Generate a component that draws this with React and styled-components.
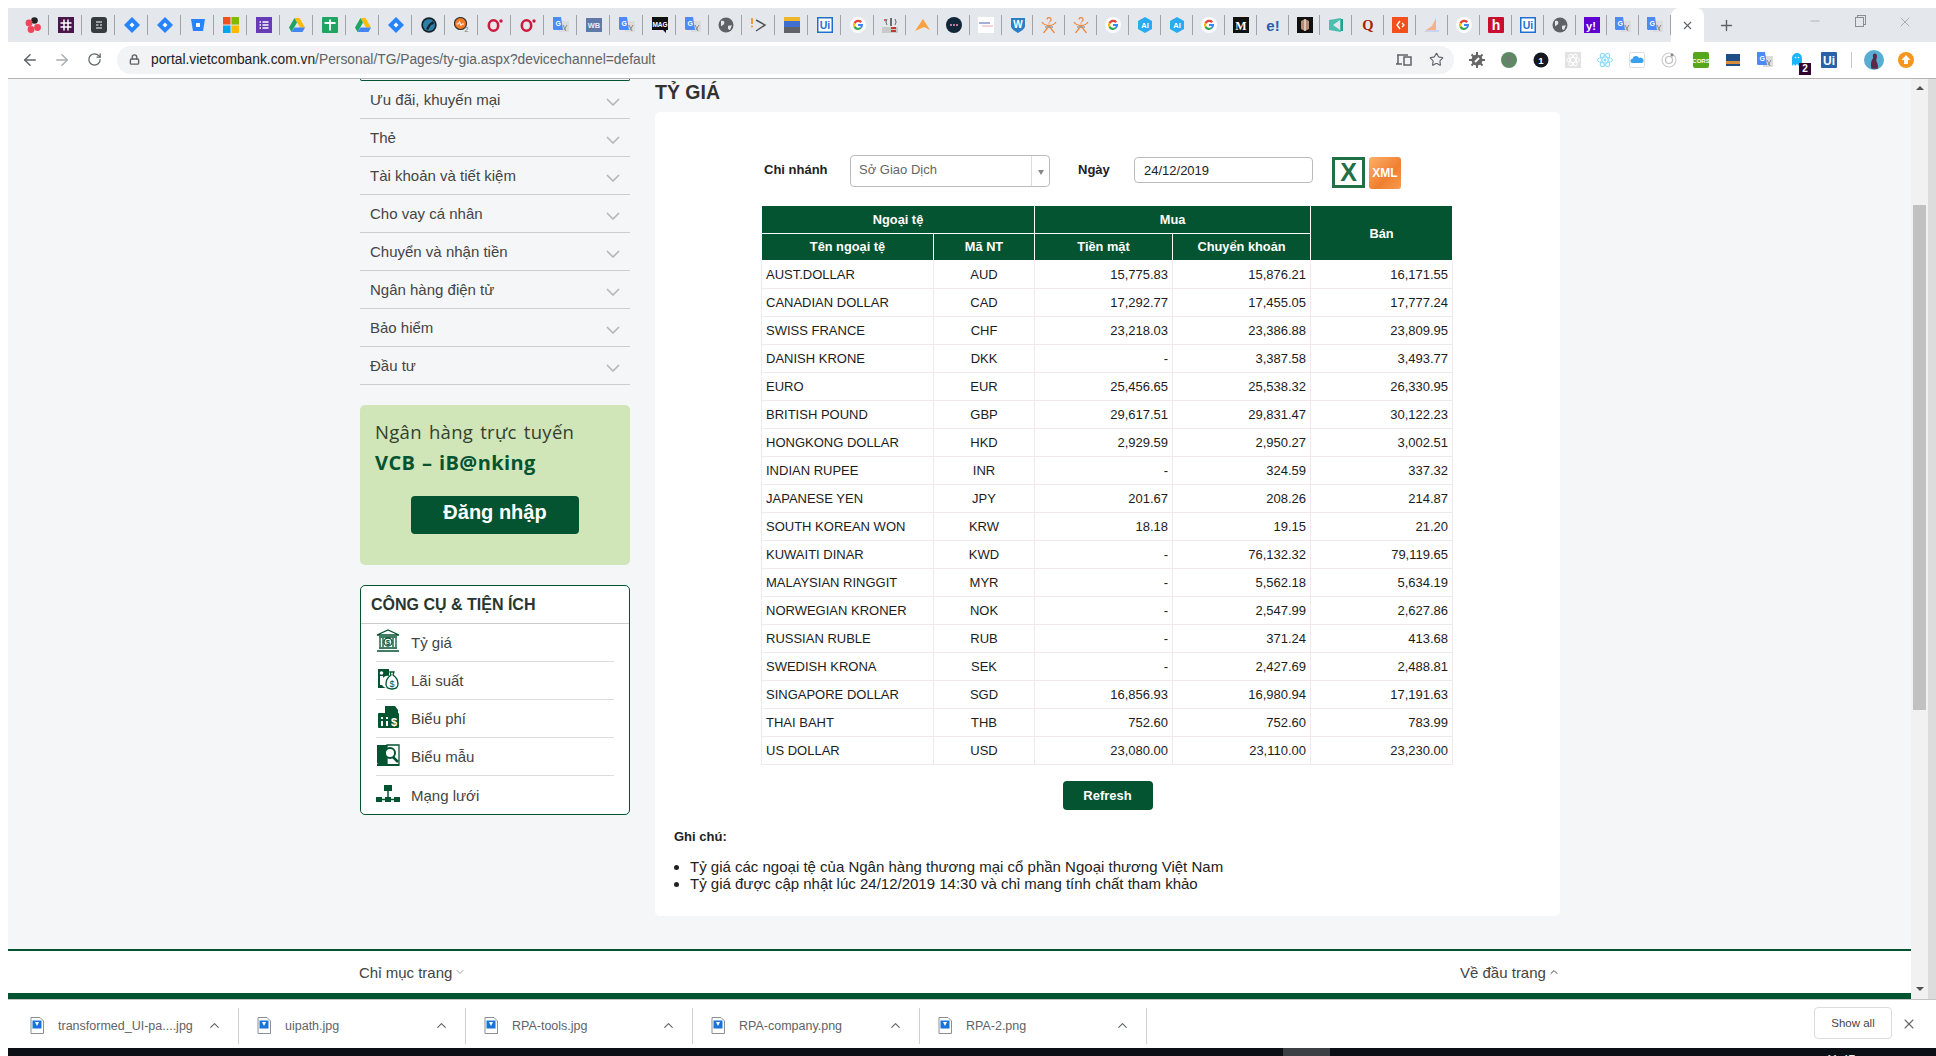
import React from "react";
import styled, { createGlobalStyle } from "styled-components";
import { ArrowLeft, ArrowRight, RotateCw, Lock, Star, Plus, X, Minus, ChevronDown, ChevronUp } from "lucide-react";

const GREEN = "#045331";

const Global = createGlobalStyle`
  html, body { margin: 0; padding: 0; background: #fff; overflow: hidden; }
  * { box-sizing: border-box; }
  body { font-family: "Liberation Sans", Arial, sans-serif; }
`;

const Window = styled.div`
  width: 1936px;
  height: 1056px;
  padding: 8px 0 0 8px;
  display: flex;
  flex-direction: column;
  overflow: hidden;
`;

/* ---------- browser chrome ---------- */
const TabStrip = styled.div`
  height: 34px;
  flex: none;
  background: #e4e7eb;
  display: flex;
  align-items: stretch;
  padding-left: 8px;
`;
const Tab = styled.div`
  width: ${(p) => (p.$narrow ? "31.9px" : "33px")};
  flex: none;
  display: flex;
  align-items: center;
  justify-content: center;
  position: relative;
  &::after {
    content: "";
    position: absolute;
    right: 0;
    top: 7px;
    height: 20px;
    width: 1px;
    background: #a0a4a8;
  }
  &:last-of-type::after { display: none; }
`;
const ActiveTab = styled.div`
  width: 33px;
  flex: none;
  background: #fff;
  border-radius: 8px 8px 0 0;
  display: flex;
  align-items: center;
  justify-content: center;
  color: #5f6368;
`;
const NewTab = styled.div`
  width: 44px;
  flex: none;
  display: flex;
  align-items: center;
  justify-content: center;
  color: #5f6368;
`;
const WinControls = styled.div`
  margin-left: auto;
  display: flex;
  align-items: flex-start;
  padding: 6px 9px 0 0;
  color: #8b8f94;
`;
const WinBtn = styled.div`
  width: 45px;
  display: flex;
  justify-content: center;
`;
const RestoreGlyph = styled.div`
  width: 9px;
  height: 10px;
  margin-top: 3px;
  border: 1px solid #8b8f94;
  box-shadow: 2px -2px 0 -1px #e4e7eb, 2px -2px 0 0 #8b8f94;
`;
const Toolbar = styled.div`
  height: 37px;
  flex: none;
  background: #fff;
  border-bottom: 1px solid #b4b4b4;
  display: flex;
  align-items: center;
  padding: 0 0 1px 6px;
`;
const NavBtn = styled.div`
  width: 32px;
  display: flex;
  justify-content: center;
  color: ${(p) => (p.$off ? "#a9adb1" : "#5f6368")};
`;
const Omnibox = styled.div`
  width: 1337px;
  height: 28px;
  margin-left: 7px;
  background: #f1f3f4;
  border-radius: 14px;
  display: flex;
  align-items: center;
  padding: 0 10px 0 12px;
  color: #5f6368;
`;
const Url = styled.div`
  margin-left: 11px;
  font-size: 13.8px;
  font-family: "Liberation Sans", sans-serif;
  color: #5f6368;
  b { font-weight: 400; color: #202124; }
`;
const OmniEnd = styled.div`
  margin-left: auto;
  display: flex;
  align-items: center;
  gap: 17px;
`;
const ExtGroup = styled.div`
  margin-left: 7px;
  display: flex;
  align-items: center;
`;
const Ext = styled.div`
  width: 32px;
  height: 24px;
  display: flex;
  align-items: center;
  justify-content: center;
  position: relative;
`;
const ExtBadge = styled.span`
  position: absolute;
  right: 2px;
  bottom: -3px;
  width: 12px;
  height: 12px;
  background: #33042e;
  color: #fff;
  font-size: 10px;
  font-weight: 700;
  line-height: 12px;
  text-align: center;
`;
const ExtDivider = styled.div`
  width: 1px;
  height: 16px;
  margin: 0 6px;
  background: #c8c8c8;
`;

/* ---------- favicons ---------- */
const Translate = () => (
  <>
    <rect x="6" y="4" width="10" height="11" fill="#dcdcdc" />
    <path d="M10 8l3 6M14 8l-3 5" stroke="#8a8a8a" strokeWidth="1" />
    <path d="M0 0h8l2 13H1.500a1.500 1.500 0 0 1-1.500-1.500z" fill="#4c8bf5" />
    <text x="2.500" y="9" fontSize="7" fontWeight="700" fill="#fff" fontFamily="Liberation Sans">G</text>
  </>
);
const GoogleG = () => (
  <>
    <circle cx="8" cy="8" r="8" fill="#fff" />
    <path d="M12 4.600A5 5 0 0 0 3.600 5.600L5.400 7A3 3 0 0 1 10.400 6z" fill="#ea4335" />
    <path d="M3.600 5.600a5 5 0 0 0 0 4.800L5.400 9a3 3 0 0 1 0-2z" fill="#fbbc05" />
    <path d="M3.600 10.400a5 5 0 0 0 7.800 1.200L9.800 10.300A3 3 0 0 1 5.400 9z" fill="#34a853" />
    <path d="M13 8.200V7H8v2h2.800a2.400 2.400 0 0 1-1 1.300l1.600 1.300A5 5 0 0 0 13 8.200z" fill="#4285f4" />
  </>
);
const Jira = () => (
  <>
    <path d="M8 0l8 8-8 8-8-8z" fill="#2684ff" />
    <path d="M8 5.500L10.500 8 8 10.500 5.500 8z" fill="#fff" />
  </>
);
const Opera = () => (
  <>
    <ellipse cx="6.500" cy="8.500" rx="4.700" ry="5.200" fill="none" stroke="#cc1b3f" strokeWidth="2.600" />
    <circle cx="14" cy="4" r="1.700" fill="#cc1b3f" />
  </>
);
const Drive = () => (
  <>
    <path d="M5.500 1h5l5.500 9.500h-5z" fill="#fbbc05" />
    <path d="M5.500 1L0 10.500 2.500 15l5.500-9.500z" fill="#1fa463" />
    <path d="M2.500 15h11l2.500-4.500H5.500z" fill="#4285f4" />
  </>
);
const Globe = () => (
  <>
    <circle cx="8" cy="8" r="7.500" fill="#5f6368" />
    <path d="M3 4c3-1 4 1 3 3s-3 1-3 3M10 9c2-1 3 0 4-1l-2 5-2-1z" fill="#e4e7eb" />
  </>
);
const Ui = () => (
  <>
    <rect x="0.750" y="0.750" width="14.500" height="14.500" fill="#fff" stroke="#1f6fd0" strokeWidth="1.500" />
    <text x="8" y="12" textAnchor="middle" fontSize="10.500" fontWeight="700" fill="#1f6fd0" fontFamily="Liberation Sans">Ui</text>
  </>
);
const AiBadge = () => (
  <>
    <path d="M8 0l7 4v8l-7 4-7-4V4z" fill="#29abf2" />
    <text x="8" y="11" textAnchor="middle" fontSize="7.500" fontWeight="700" fill="#fff" fontFamily="Liberation Sans">AI</text>
  </>
);
const Stickman = () => (
  <g stroke="#f0883e" strokeWidth="1.300" fill="none">
    <path d="M6 2.500a2 2 0 1 1 2.500 2M8 5.500v1" />
    <path d="M1 5c2 3 4 3.500 7 3.500s5-.5 7-3.500" />
    <path d="M8 9l-5.500 7M8 9l5.500 7" />
    <path d="M4 10h8" stroke="#9a9a9a" />
  </g>
);

const glyphs = {
  asana: (
    <>
      <circle cx="9.500" cy="3.500" r="3.300" fill="#222" />
      <circle cx="4" cy="6" r="3.400" fill="#f0445a" />
      <circle cx="12.500" cy="10.500" r="3.400" fill="#f0445a" />
      <circle cx="6" cy="12.500" r="3.400" fill="#f0445a" />
    </>
  ),
  slack: (
    <>
      <rect width="16" height="16" fill="#4a154b" />
      <path d="M6 3v10M10 3v10M3 6h10M3 10h10" stroke="#fff" strokeWidth="1.500" strokeLinecap="round" />
    </>
  ),
  notes: (
    <>
      <rect width="16" height="16" rx="3" fill="#353c40" />
      <path d="M5 5h6M5 8h2.500M9 8h2M5 11h6" stroke="#fff" strokeWidth="1.200" />
    </>
  ),
  jira: <Jira />,
  bitbucket: (
    <>
      <path d="M1 2h14l-2 12H3z" fill="#2684ff" />
      <rect x="6" y="6" width="4" height="4" rx="0.500" fill="#fff" />
    </>
  ),
  microsoft: (
    <>
      <rect width="7.500" height="7.500" fill="#f25022" />
      <rect x="8.500" width="7.500" height="7.500" fill="#7fba00" />
      <rect y="8.500" width="7.500" height="7.500" fill="#00a4ef" />
      <rect x="8.500" y="8.500" width="7.500" height="7.500" fill="#ffb900" />
    </>
  ),
  forms: (
    <>
      <rect width="16" height="16" fill="#673ab7" />
      <path d="M6.500 5h6M6.500 8h6M6.500 11h6M3.500 5h1.500M3.500 8h1.500M3.500 11h1.500" stroke="#fff" strokeWidth="1.500" />
    </>
  ),
  drive: <Drive />,
  sheet: (
    <>
      <rect width="16" height="16" rx="1" fill="#1fa463" />
      <path d="M2.500 6h11M8 2.500v11" stroke="#fff" strokeWidth="1.800" />
    </>
  ),
  wrench: (
    <>
      <circle cx="8" cy="8" r="7.700" fill="#17232b" />
      <circle cx="8" cy="8" r="6" fill="#2d7ea8" />
      <path d="M12 4L8 7l-3 5 2 1 3-5 3-1z" fill="#17232b" />
    </>
  ),
  o2: (
    <>
      <circle cx="6.500" cy="6.500" r="6" fill="#f57c2b" stroke="#333" strokeWidth="1.200" />
      <path d="M2.500 7h2l1-2.500 1.500 4 1-1.500h2" stroke="#fff" strokeWidth="1" fill="none" />
      <text x="10.500" y="15" fontSize="7" fill="#777" fontFamily="Liberation Sans">2</text>
    </>
  ),
  opera: <Opera />,
  translate: <Translate />,
  wa: (
    <>
      <rect y="1" width="16" height="14" fill="#6079a8" />
      <text x="8" y="11" textAnchor="middle" fontSize="7.500" fontWeight="700" fill="#e6ecf5" fontFamily="Liberation Sans">WB</text>
    </>
  ),
  mag: (
    <>
      <path d="M0 0h16v13h-2v3l-3-3H0z" fill="#111" />
      <text x="8" y="9.500" textAnchor="middle" fontSize="6.500" fontWeight="700" fill="#fff" fontFamily="Liberation Sans">MAG</text>
    </>
  ),
  globe: <Globe />,
  play: (
    <>
      <path d="M1 1v6" stroke="#f0922b" strokeWidth="1.800" />
      <circle cx="1" cy="9.500" r="1" fill="#f0922b" />
      <path d="M5 3l9 5-9 6" fill="none" stroke="#555" strokeWidth="1.500" />
    </>
  ),
  stack: (
    <>
      <rect width="16" height="4" fill="#f0b72b" />
      <rect y="4" width="16" height="6" fill="#3f6fd0" />
      <rect y="10" width="16" height="6" fill="#5f6368" />
    </>
  ),
  ui: <Ui />,
  google: <GoogleG />,
  robot: (
    <>
      <rect x="0" y="10" width="16" height="6" fill="#c9c9c9" />
      <rect x="9" y="10" width="5" height="2" fill="#cc3333" />
      <rect x="9" y="13" width="5" height="2" fill="#cc3333" />
      <path d="M9 1v8" stroke="#444" strokeWidth="1.500" />
      <path d="M5 2a5 5 0 0 0 0 6M13 2a5 5 0 0 1 0 6" stroke="#666" fill="none" />
      <circle cx="3" cy="3" r="1" fill="#cc3333" />
    </>
  ),
  triangle: <path d="M9 2L16 13 10 10 1 14z" fill="#f9a03f" />,
  dark: (
    <>
      <circle cx="8" cy="8" r="8" fill="#12263a" />
      <path d="M4 8h8" stroke="#c773a0" strokeWidth="2" strokeDasharray="2 1" />
    </>
  ),
  banner: (
    <>
      <rect width="16" height="16" fill="#fff" />
      <path d="M1 6h11" stroke="#4a63b5" strokeWidth="1" />
      <path d="M4 9h11" stroke="#d88" strokeWidth="0.700" />
    </>
  ),
  shield: (
    <>
      <path d="M1 1h14v8c0 3-4 5-7 7-3-2-7-4-7-7z" fill="#2b7fc2" />
      <text x="8" y="11" textAnchor="middle" fontSize="10" fontWeight="700" fill="#fff" fontFamily="Liberation Sans">W</text>
    </>
  ),
  stickman: <Stickman />,
  ai: <AiBadge />,
  medium: (
    <>
      <rect width="16" height="16" fill="#111" />
      <text x="8" y="12.500" textAnchor="middle" fontSize="12" fontWeight="700" fill="#fff" fontFamily="Liberation Serif">M</text>
    </>
  ),
  ie: <text x="8" y="13.500" textAnchor="middle" fontSize="15" fontWeight="700" fill="#2d5da8" fontFamily="Liberation Sans">e!</text>,
  box: (
    <>
      <rect width="16" height="16" fill="#111" />
      <path d="M4 4l4-2 4 2v8l-4 2-4-2z" fill="#b98a72" />
      <path d="M8 2v12" stroke="#fff" />
    </>
  ),
  teal: (
    <>
      <path d="M1 3l12-2v14L1 13z" fill="#4dbdb0" />
      <path d="M5 8l7-5v10z" fill="#e4e7eb" />
      <rect x="13" y="2" width="2" height="12" fill="#2a9d90" />
    </>
  ),
  quora: <text x="8" y="13" textAnchor="middle" fontSize="14.500" fontWeight="700" fill="#a82400" fontFamily="Liberation Serif">Q</text>,
  orangeBox: (
    <>
      <rect width="16" height="16" fill="#f4501e" />
      <path d="M8 4L5 8l3 4M10 6l2 2-2 2" stroke="#fff" strokeWidth="1.300" fill="none" />
    </>
  ),
  peach: (
    <>
      <path d="M12 1L8 9 2 13h10z" fill="#f6b08a" />
      <path d="M1 14h14" stroke="#c9c9e8" strokeWidth="1.500" />
    </>
  ),
  hotjar: (
    <>
      <rect width="16" height="16" rx="1" fill="#c8102e" />
      <text x="8" y="13" textAnchor="middle" fontSize="14" fontWeight="700" fill="#fff" fontFamily="Liberation Sans">h</text>
    </>
  ),
  yahoo: (
    <>
      <rect width="16" height="16" fill="#5f01d1" />
      <text x="7" y="12.500" textAnchor="middle" fontSize="11" fontWeight="700" fill="#fff" fontFamily="Liberation Sans">y!</text>
    </>
  ),
  gear: (
    <>
      <circle cx="8" cy="8" r="5.500" fill="#666" />
      <path d="M8 0v16M0 8h16M2.500 2.500l11 11M13.500 2.500l-11 11" stroke="#666" strokeWidth="2" />
      <path d="M6 10l4-4" stroke="#fff" strokeWidth="2" />
    </>
  ),
  mongo: (
    <>
      <circle cx="8" cy="8" r="8" fill="#5d8a63" />
      <path d="M8.500 2c2 3 1 8-2 12 0-4-1-8 2-12z" fill="#777" />
    </>
  ),
  one: (
    <>
      <circle cx="8" cy="8" r="7.500" fill="#14181f" />
      <text x="8" y="11.500" textAnchor="middle" fontSize="9.500" fontWeight="700" fill="#fff" fontFamily="Liberation Sans">1</text>
    </>
  ),
  atomGray: (
    <>
      <rect width="16" height="16" fill="#e2e2e2" />
      <g stroke="#fff" fill="none"><ellipse cx="8" cy="8" rx="6.500" ry="2.500" /><ellipse cx="8" cy="8" rx="6.500" ry="2.500" transform="rotate(60 8 8)" /><ellipse cx="8" cy="8" rx="6.500" ry="2.500" transform="rotate(120 8 8)" /></g>
    </>
  ),
  react: (
    <>
      <g stroke="#8edcf7" fill="none"><ellipse cx="8" cy="8" rx="7.500" ry="3" /><ellipse cx="8" cy="8" rx="7.500" ry="3" transform="rotate(60 8 8)" /><ellipse cx="8" cy="8" rx="7.500" ry="3" transform="rotate(120 8 8)" /></g>
      <circle cx="8" cy="8" r="1.500" fill="#8edcf7" />
    </>
  ),
  cloud: (
    <>
      <rect x="0.500" y="0.500" width="15" height="15" rx="2" fill="#fff" stroke="#ddd" />
      <path d="M3 11a2.200 2.200 0 0 1 .5-4.300A3.500 3.500 0 0 1 10 6a2.600 2.600 0 0 1 3 5z" fill="#3aa0f0" />
    </>
  ),
  target: (
    <>
      <circle cx="8" cy="8" r="7" fill="#fff" stroke="#ccc" strokeWidth="1.200" />
      <circle cx="8" cy="8" r="3.500" fill="none" stroke="#bbb" strokeWidth="1.200" />
      <circle cx="11" cy="3" r="1.500" fill="#888" />
    </>
  ),
  cors: (
    <>
      <rect width="16" height="16" rx="2" fill="#55a61c" />
      <text x="8" y="10.500" textAnchor="middle" fontSize="6" fontWeight="700" fill="#fff" fontFamily="Liberation Sans">CORS</text>
    </>
  ),
  book: (
    <>
      <rect x="1" y="2" width="14" height="12" fill="#1d4f86" />
      <rect x="1" y="9" width="14" height="3" fill="#d98a3a" />
    </>
  ),
  ghost: (
    <>
      <path d="M3 14V6a5 5 0 0 1 10 0v5l-2 0-1 3-2-2-2 2-1-2z" fill="#19b5fe" />
      <circle cx="6.500" cy="5.500" r="0.800" fill="#fff" />
      <circle cx="9.500" cy="5.500" r="0.800" fill="#fff" />
    </>
  ),
  uiBlue: (
    <>
      <rect width="16" height="16" rx="1" fill="#2a62a8" />
      <text x="8" y="12.500" textAnchor="middle" fontSize="12" fontWeight="700" fill="#fff" fontFamily="Liberation Sans">Ui</text>
    </>
  ),
  upload: (
    <>
      <circle cx="8" cy="8" r="8" fill="#f5971d" />
      <path d="M8 3l4.500 5H10v4H6V8H3.500z" fill="#fff" />
    </>
  ),
  avatar: (
    <>
      <circle cx="8" cy="8" r="8" fill="#58aed2" />
      <path d="M6 15c-1-4 0-7 1-8s-1-3 1-4 3 2 2 4 2 4 1 8z" fill="#5a2a48" />
    </>
  ),
};

const Fav = ({ kind, size = 16 }) => (
  <svg width={size} height={size} viewBox="0 0 16 16">
    {glyphs[kind]}
  </svg>
);

const tabs = [
  "asana", "slack", "notes", "jira", "jira", "bitbucket", "microsoft", "forms", "drive", "sheet",
  "drive", "jira", "wrench", "o2", "opera", "opera", "translate", "wa", "translate", "mag",
  "translate", "globe", "play", "stack", "ui", "google", "robot", "triangle", "dark", "banner",
  "shield", "stickman", "stickman", "google", "ai", "ai", "google", "medium", "ie", "box",
  "teal", "quora", "orangeBox", "peach", "google", "hotjar", "ui", "globe", "yahoo", "translate",
  "translate",
];
const extensions = ["gear", "mongo", "one", "atomGray", "react", "cloud", "target", "cors", "book", "translate", "ghost", "uiBlue"];

/* ---------- page ---------- */
const Viewport = styled.div`
  flex: 1;
  min-height: 0;
  display: flex;
`;
const Page = styled.div`
  flex: 1;
  min-width: 0;
  background: #f5f6f8;
  display: flex;
  flex-direction: column;
`;
const Content = styled.div`
  flex: 1;
  min-height: 0;
  display: flex;
  gap: 25px;
  padding-left: 352px;
`;
const Sidebar = styled.aside`
  width: 270px;
  flex: none;
`;
const MenuCap = styled.div`
  height: 2px;
  border: 1px solid ${GREEN};
  border-top: 0;
  border-radius: 0 0 3px 3px;
`;
const MenuRow = styled.div`
  height: 38px;
  display: flex;
  align-items: center;
  justify-content: space-between;
  padding: 0 10px;
  border-bottom: 1px solid #cbcdd0;
  font-size: 15px;
  color: #444;
`;
const MenuChevron = styled.svg`
  margin-top: 4px;
`;
const Banner = styled.section`
  margin-top: 20px;
  height: 160px;
  background: #d0e5b8;
  border-radius: 5px;
  padding: 14px 15px 0;
`;
const BannerTitle = styled.div`
  font-family: "Open Sans", sans-serif;
  font-size: 18.500px;
  line-height: 25px;
  letter-spacing: 0.3px;
  word-spacing: 2px;
  color: #33402e;
  white-space: nowrap;
`;
const BannerBrand = styled(BannerTitle)`
  margin-top: 6px;
  font-size: 20px;
  letter-spacing: 0.4px;
  font-weight: 700;
  color: ${GREEN};
  word-spacing: 1px;
`;
const LoginButton = styled.button`
  display: block;
  width: 168px;
  height: 38px;
  margin: 21px 0 0 36px;
  border: 0;
  border-radius: 4px;
  background: ${GREEN};
  color: #fff;
  font: 700 20px "Liberation Sans", sans-serif;
  padding: 0 0 6px;
`;
const Tools = styled.section`
  margin-top: 20px;
  height: 230px;
  background: #fff;
  border: 1px solid ${GREEN};
  border-radius: 5px;
  overflow: hidden;
`;
const ToolsTitle = styled.h3`
  margin: 0;
  height: 38px;
  border-bottom: 1px solid #ccc;
  padding: 0 10px;
  display: flex;
  align-items: center;
  font-size: 16px;
  font-weight: 700;
  color: #28372e;
  white-space: nowrap;
`;
const ToolRow = styled.div`
  height: 38px;
  margin: 0 15px;
  display: flex;
  align-items: center;
  gap: 11px;
  font-size: 15px;
  color: #444;
  border-bottom: ${(p) => (p.$last ? "0" : "1px solid #ddd")};
`;
const ToolIcon = styled.svg`
  flex: none;
  margin-top: -3px;
`;

const Main = styled.main`
  width: 905px;
  flex: none;
`;
const PageTitle = styled.h1`
  margin: 0;
  height: 33px;
  padding-top: 3px;
  font-size: 19.500px;
  line-height: 20px;
  font-weight: 700;
  color: #333;
`;
const Card = styled.div`
  height: 804px;
  background: #fff;
  border-radius: 5px;
  padding-top: 43px;
`;
const FilterRow = styled.div`
  height: 50px;
  display: flex;
  align-items: flex-start;
  padding-left: 109px;
`;
const FilterLabel = styled.label`
  width: ${(p) => p.$w}px;
  padding-top: 7px;
  padding-left: ${(p) => p.$indent || 0}px;
  flex: none;
  font-size: 13px;
  font-weight: 700;
  color: #222;
`;
const SelectBox = styled.div`
  width: 200px;
  height: 32px;
  flex: none;
  border: 1px solid #bbb;
  border-radius: 4px;
  display: flex;
  font-size: 13px;
  color: #666;
`;
const SelectText = styled.span`
  flex: 1;
  padding: 6px 8px;
`;
const SelectArrow = styled.span`
  width: 18px;
  border-left: 1px solid #ddd;
  display: flex;
  align-items: center;
  justify-content: center;
  &::after {
    content: "";
    margin-top: 3px;
    border: 3px solid transparent;
    border-top: 5px solid #888;
    border-bottom: 0;
  }
`;
const DateBox = styled.div`
  width: 179px;
  height: 26px;
  margin: 2px 0 0 0;
  flex: none;
  border: 1px solid #bbb;
  border-radius: 4px;
  padding: 0 9px;
  font-size: 13px;
  line-height: 25px;
  color: #222;
`;
const ExcelIcon = styled.div`
  width: 33px;
  height: 31px;
  margin: 2px 0 0 19px;
  flex: none;
  border: 3px solid #1f7044;
  background: #fff;
  color: #1f7044;
  font-size: 25px;
  font-weight: 700;
  line-height: 25px;
  text-align: center;
`;
const XmlIcon = styled.div`
  width: 32px;
  height: 32px;
  margin: 2px 0 0 4px;
  flex: none;
  border-radius: 3px;
  background: linear-gradient(135deg, #fbb06c, #f07f30 60%, #f79a50);
  color: #fff;
  font-size: 12px;
  font-weight: 700;
  line-height: 32px;
  text-align: center;
`;
const RateTable = styled.table`
  width: 691px;
  margin-left: 106px;
  border-collapse: collapse;
  table-layout: fixed;
  font-size: 13px;
  color: #1c1c1c;
`;
const Th = styled.th`
  height: 27.500px;
  padding: 0;
  background: ${GREEN};
  border: 1px solid #fff;
  color: #fff;
  font-weight: 700;
  font-size: 12.800px;
  text-align: center;
`;
const Td = styled.td`
  height: 28px;
  padding: 0 4px;
  border: 1px solid #f1e9ee;
  text-align: ${(p) => p.$align || "right"};
  white-space: nowrap;
`;
const RefreshButton = styled.button`
  display: block;
  width: 90px;
  height: 29px;
  margin: 16px auto 0;
  border: 0;
  border-radius: 4px;
  background: ${GREEN};
  color: #fff;
  font: 700 13px "Liberation Sans", sans-serif;
`;
const NoteTitle = styled.p`
  margin: 19px 0 0 19px;
  font-size: 13px;
  line-height: 15px;
  font-weight: 700;
  color: #222;
`;
const NoteList = styled.ul`
  margin: 14px 0 0 35px;
  padding: 0;
  font-size: 15px;
  line-height: 17px;
  color: #222;
`;
const PageFooter = styled.footer`
  flex: none;
  height: 50px;
  background: #fff;
  border-top: 2px solid ${GREEN};
  border-bottom: 6px solid ${GREEN};
  display: flex;
  align-items: center;
  font-size: 15px;
  color: #444;
  padding-left: 351px;
`;
const FooterLink = styled.span`
  display: flex;
  align-items: center;
  gap: 2px;
  width: ${(p) => p.$w}px;
  color: #444;
  svg { color: #aaa; }
`;
const Scrollbar = styled.div`
  width: 17px;
  flex: none;
  background: #f1f1f1;
  display: flex;
  flex-direction: column;
  align-items: center;
  padding-top: 7px;
`;
const ArrowUp = styled.div`
  width: 0;
  height: 0;
  border: 4px solid transparent;
  border-top: 0;
  border-bottom: 4px solid #505050;
`;
const ArrowDown = styled(ArrowUp)`
  transform: rotate(180deg);
  margin: auto 0 8px;
`;
const Thumb = styled.div`
  width: 13px;
  height: 505px;
  margin-top: 115px;
  background: #c1c1c1;
`;
const EdgeStrip = styled.div`
  width: 8px;
  flex: none;
  background: #dcdcdc;
`;

/* ---------- downloads shelf ---------- */
const Shelf = styled.div`
  flex: none;
  height: 49px;
  background: #fff;
  border-top: 1px solid #c4c4c4;
  display: flex;
  align-items: center;
  padding-left: 4px;
`;
const ShelfItem = styled.div`
  width: 227px;
  height: 36px;
  flex: none;
  margin-top: 3px;
  display: flex;
  align-items: center;
  padding: 0 16px 0 18px;
  border-right: 1px solid #d0d0d0;
  font-size: 12.500px;
  font-family: "Liberation Sans", sans-serif;
  color: #5f6368;
  svg:last-child { margin-left: auto; }
`;
const FileName = styled.span`
  margin-left: 14px;
  margin-top: 1px;
`;
const ShowAll = styled.button`
  margin-left: auto;
  width: 78px;
  height: 32px;
  margin-top: -2px;
  background: #fff;
  border: 1px solid #dadce0;
  border-radius: 4px;
  font: 11.500px "Liberation Sans", sans-serif;
  color: #444;
  padding: 0;
`;
const ShelfClose = styled.div`
  width: 44px;
  flex: none;
  display: flex;
  padding-left: 9px;
  color: #666;
`;
const Taskbar = styled.div`
  height: 8px;
  flex: none;
  background: #0c1016;
  display: flex;
  overflow: hidden;
  padding-left: 1275px;
`;
const TaskButton = styled.div`
  width: 47px;
  background: #3c4045;
`;
const Clock = styled.div`
  margin-left: 496px;
  padding-top: 5px;
  font-size: 12px;
  color: #e8e8e8;
`;

const FileIcon = () => (
  <svg width="14" height="17" viewBox="0 0 14 17">
    <path d="M1 .500h9l3.500 3.500v12.500H1z" fill="#fff" stroke="#8a8f95" />
    <rect x="2.500" y="3.500" width="9" height="8" fill="#1a73d9" />
    <path d="M5 5h4l-2 4z" fill="#fff" />
  </svg>
);

const SmallChevron = () => (
  <MenuChevron width="14" height="8" viewBox="0 0 14 8">
    <path d="M1 1l6 6 6-6" fill="none" stroke="#b4b6b8" strokeWidth="1.600" />
  </MenuChevron>
);

const menuItems = [
  "Ưu đãi, khuyến mại", "Thẻ", "Tài khoản và tiết kiệm", "Cho vay cá nhân",
  "Chuyển và nhận tiền", "Ngân hàng điện tử", "Bảo hiểm", "Đầu tư",
];

const toolIcons = {
  bank: (
    <g fill="none" stroke={GREEN} strokeWidth="1.300">
      <path d="M1 6l11-5 11 5zM3 8h18M3 19h18M1 22h22" />
      <path d="M4 9v9M20 9v9M7 9v9M17 9v9" />
      <circle cx="12" cy="13" r="4" />
      <text x="12" y="16" textAnchor="middle" fontSize="8" fontWeight="700" fill={GREEN} stroke="none" fontFamily="Liberation Sans">$</text>
    </g>
  ),
  rate: (
    <>
      <path d="M2 2h11v7a6 6 0 0 0-3 12H2z" fill={GREEN} />
      <circle cx="5.500" cy="6" r="1.800" fill="#fff" />
      <rect x="4" y="9" width="3" height="9" fill="#fff" />
      <path d="M14 5l4 0-1 3c3 2 5 6 5 9 0 4-3 5-6 5s-6-1-6-5c0-3 2-7 5-9z" fill="#fff" stroke={GREEN} strokeWidth="1.300" />
      <text x="16" y="20" textAnchor="middle" fontSize="9" fill={GREEN} fontFamily="Liberation Sans">$</text>
    </>
  ),
  fee: (
    <>
      <path d="M9 1h10l3 4v4H9z" fill={GREEN} />
      <rect x="2" y="8" width="21" height="15" rx="1" fill={GREEN} />
      <rect x="5" y="12" width="2" height="2" fill="#fff" />
      <rect x="5" y="16" width="2" height="5" fill="#fff" />
      <rect x="10" y="12" width="2" height="2" fill="#fff" />
      <rect x="10" y="16" width="2" height="5" fill="#fff" />
      <text x="18" y="21" textAnchor="middle" fontSize="11" fontWeight="700" fill="#fff" fontFamily="Liberation Sans">$</text>
    </>
  ),
  form: (
    <>
      <path d="M1 2h10v20H3l-2-2z" fill={GREEN} />
      <path d="M11 2h12v20H11z" fill="none" stroke={GREEN} strokeWidth="1.300" />
      <path d="M1 22h22" stroke={GREEN} strokeWidth="2" />
      <circle cx="14" cy="10" r="5" fill="#fff" stroke={GREEN} strokeWidth="2" />
      <path d="M17 14l5 5" stroke={GREEN} strokeWidth="2.500" />
    </>
  ),
  network: (
    <>
      <rect x="8" y="3" width="8" height="6" fill={GREEN} />
      <rect x="0" y="15" width="6" height="5" fill={GREEN} />
      <rect x="9" y="15" width="6" height="5" fill={GREEN} />
      <rect x="18" y="15" width="6" height="5" fill={GREEN} />
      <path d="M12 9v6M3 17.500h18" stroke={GREEN} strokeWidth="1.500" />
    </>
  ),
};
const tools = [
  ["bank", "Tỷ giá"], ["rate", "Lãi suất"], ["fee", "Biểu phí"], ["form", "Biểu mẫu"], ["network", "Mạng lưới"],
];

const rates = [
  ["AUST.DOLLAR", "AUD", "15,775.83", "15,876.21", "16,171.55"],
  ["CANADIAN DOLLAR", "CAD", "17,292.77", "17,455.05", "17,777.24"],
  ["SWISS FRANCE", "CHF", "23,218.03", "23,386.88", "23,809.95"],
  ["DANISH KRONE", "DKK", "-", "3,387.58", "3,493.77"],
  ["EURO", "EUR", "25,456.65", "25,538.32", "26,330.95"],
  ["BRITISH POUND", "GBP", "29,617.51", "29,831.47", "30,122.23"],
  ["HONGKONG DOLLAR", "HKD", "2,929.59", "2,950.27", "3,002.51"],
  ["INDIAN RUPEE", "INR", "-", "324.59", "337.32"],
  ["JAPANESE YEN", "JPY", "201.67", "208.26", "214.87"],
  ["SOUTH KOREAN WON", "KRW", "18.18", "19.15", "21.20"],
  ["KUWAITI DINAR", "KWD", "-", "76,132.32", "79,119.65"],
  ["MALAYSIAN RINGGIT", "MYR", "-", "5,562.18", "5,634.19"],
  ["NORWEGIAN KRONER", "NOK", "-", "2,547.99", "2,627.86"],
  ["RUSSIAN RUBLE", "RUB", "-", "371.24", "413.68"],
  ["SWEDISH KRONA", "SEK", "-", "2,427.69", "2,488.81"],
  ["SINGAPORE DOLLAR", "SGD", "16,856.93", "16,980.94", "17,191.63"],
  ["THAI BAHT", "THB", "752.60", "752.60", "783.99"],
  ["US DOLLAR", "USD", "23,080.00", "23,110.00", "23,230.00"],
];

const downloads = ["transformed_UI-pa....jpg", "uipath.jpg", "RPA-tools.jpg", "RPA-company.png", "RPA-2.png"];

const App = () => {
  return (
    <Window>
      <Global />
      <TabStrip>
        {tabs.map((kind, i) => (
          <Tab key={i} $narrow={i >= 26}>
            <Fav kind={kind} />
          </Tab>
        ))}
        <ActiveTab>
          <X size={13} strokeWidth={2} />
        </ActiveTab>
        <NewTab>
          <Plus size={17} strokeWidth={2} />
        </NewTab>
        <WinControls>
          <WinBtn><Minus size={14} strokeWidth={1} /></WinBtn>
          <WinBtn><RestoreGlyph /></WinBtn>
          <WinBtn><X size={16} strokeWidth={1} /></WinBtn>
        </WinControls>
      </TabStrip>
      <Toolbar>
        <NavBtn><ArrowLeft size={18} strokeWidth={2} /></NavBtn>
        <NavBtn $off><ArrowRight size={18} strokeWidth={2} /></NavBtn>
        <NavBtn><RotateCw size={15} strokeWidth={2} /></NavBtn>
        <Omnibox>
          <Lock size={11} strokeWidth={3} color="#5f6368" />
          <Url><b>portal.vietcombank.com.vn</b>/Personal/TG/Pages/ty-gia.aspx?devicechannel=default</Url>
          <OmniEnd>
            <svg width="16" height="12" viewBox="0 0 16 12">
              <path d="M1 1h11M2 1v8H1M6 10H0" fill="none" stroke="#5f6368" strokeWidth="1.500" />
              <rect x="8" y="3" width="7" height="8" fill="none" stroke="#5f6368" strokeWidth="1.500" />
            </svg>
            <Star size={15} strokeWidth={1.800} color="#5f6368" />
          </OmniEnd>
        </Omnibox>
        <ExtGroup>
          {extensions.map((kind, i) => (
            <Ext key={i}>
              <Fav kind={kind} />
              {kind === "ghost" && <ExtBadge>2</ExtBadge>}
            </Ext>
          ))}
          <ExtDivider />
          <Ext><Fav kind="avatar" size={20} /></Ext>
          <Ext><Fav kind="upload" /></Ext>
        </ExtGroup>
      </Toolbar>

      <Viewport>
        <Page>
          <Content>
            <Sidebar>
              <MenuCap />
              {menuItems.map((item) => (
                <MenuRow key={item}>
                  {item}
                  <SmallChevron />
                </MenuRow>
              ))}
              <Banner>
                <BannerTitle>Ngân hàng trực tuyến</BannerTitle>
                <BannerBrand>VCB – iB@nking</BannerBrand>
                <LoginButton>Đăng nhập</LoginButton>
              </Banner>
              <Tools>
                <ToolsTitle>CÔNG CỤ &amp; TIỆN ÍCH</ToolsTitle>
                {tools.map(([icon, label], i) => (
                  <ToolRow key={label} $last={i === tools.length - 1}>
                    <ToolIcon width="24" height="24" viewBox="0 0 24 24">{toolIcons[icon]}</ToolIcon>
                    {label}
                  </ToolRow>
                ))}
              </Tools>
            </Sidebar>
            <Main>
              <PageTitle>TỶ GIÁ</PageTitle>
              <Card>
                <FilterRow>
                  <FilterLabel $w={86}>Chi nhánh</FilterLabel>
                  <SelectBox>
                    <SelectText>Sở Giao Dịch</SelectText>
                    <SelectArrow />
                  </SelectBox>
                  <FilterLabel $w={84} $indent={28}>Ngày</FilterLabel>
                  <DateBox>24/12/2019</DateBox>
                  <ExcelIcon>X</ExcelIcon>
                  <XmlIcon>XML</XmlIcon>
                </FilterRow>
                <RateTable>
                  <colgroup>
                    <col width="172" />
                    <col width="101" />
                    <col width="138" />
                    <col width="138" />
                    <col width="142" />
                  </colgroup>
                  <thead>
                    <tr>
                      <Th colSpan={2}>Ngoại tệ</Th>
                      <Th colSpan={2}>Mua</Th>
                      <Th rowSpan={2}>Bán</Th>
                    </tr>
                    <tr>
                      <Th>Tên ngoại tệ</Th>
                      <Th>Mã NT</Th>
                      <Th>Tiền mặt</Th>
                      <Th>Chuyển khoản</Th>
                    </tr>
                  </thead>
                  <tbody>
                    {rates.map(([name, code, cash, transfer, sell]) => (
                      <tr key={code}>
                        <Td $align="left">{name}</Td>
                        <Td $align="center">{code}</Td>
                        <Td>{cash}</Td>
                        <Td>{transfer}</Td>
                        <Td>{sell}</Td>
                      </tr>
                    ))}
                  </tbody>
                </RateTable>
                <RefreshButton>Refresh</RefreshButton>
                <NoteTitle>Ghi chú:</NoteTitle>
                <NoteList>
                  <li>Tỷ giá các ngoại tệ của Ngân hàng thương mại cổ phần Ngoại thương Việt Nam</li>
                  <li>Tỷ giá được cập nhật lúc 24/12/2019 14:30 và chỉ mang tính chất tham khảo</li>
                </NoteList>
              </Card>
            </Main>
          </Content>
          <PageFooter>
            <FooterLink $w={1101}>Chỉ mục trang <ChevronDown size={12} /></FooterLink>
            <FooterLink $w={120}>Về đầu trang <ChevronUp size={12} color="#444" /></FooterLink>
          </PageFooter>
        </Page>
        <Scrollbar>
          <ArrowUp />
          <Thumb />
          <ArrowDown />
        </Scrollbar>
        <EdgeStrip />
      </Viewport>

      <Shelf>
        {downloads.map((name) => (
          <ShelfItem key={name}>
            <FileIcon />
            <FileName>{name}</FileName>
            <ChevronUp size={15} strokeWidth={1.800} />
          </ShelfItem>
        ))}
        <ShowAll>Show all</ShowAll>
        <ShelfClose><X size={16} strokeWidth={1.600} /></ShelfClose>
      </Shelf>
      <Taskbar>
        <TaskButton />
        <Clock>11:47</Clock>
      </Taskbar>
    </Window>
  );
};

export default App;
